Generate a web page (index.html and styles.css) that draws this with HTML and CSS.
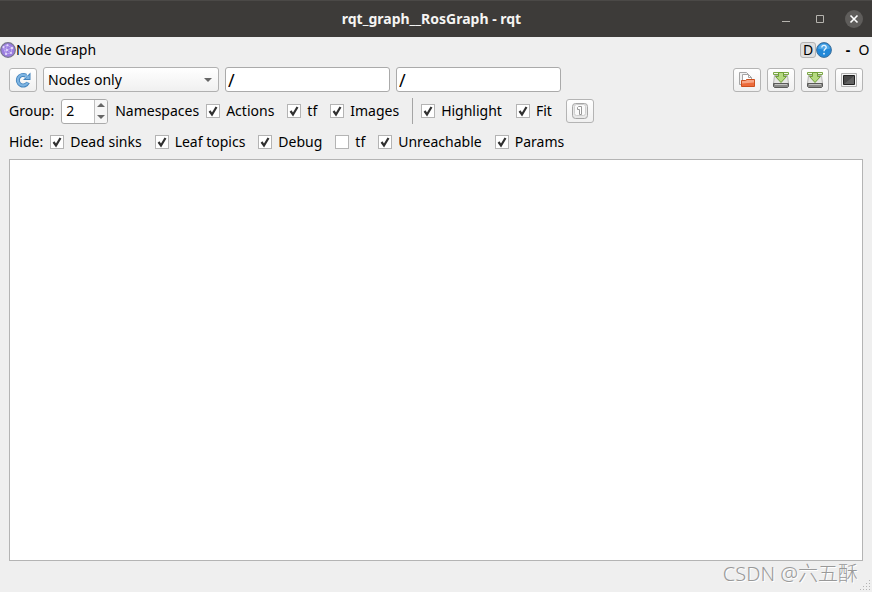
FILE: index.html
```
<!DOCTYPE html>
<html lang="en">
<head>
	<meta charset="UTF-8">
	<title>rqt_graph__RosGraph - rqt</title>
	<link rel="stylesheet" href="styles.css">
</head>
<body>
	<header class="titlebar">
		<h1>rqt_graph__RosGraph - rqt</h1>
		<div class="window-buttons">
			<button type="button" aria-label="Minimize"><svg width="18" height="18"><path d="M5 11.500h8" stroke="#b5b3ae"/></svg></button>
			<button type="button" aria-label="Maximize"><svg width="18" height="18"><path d="M5.500 5.500h7v7h-7z" fill="none" stroke="#b5b3ae"/></svg></button>
			<button type="button" class="close" aria-label="Close"><svg width="18" height="18"><path d="M5.500 5.500l7 7M12.500 5.500l-7 7" stroke="#fff" stroke-width="1.600"/></svg></button>
		</div>
	</header>

	<div class="dock">
		<svg class="dock-icon" width="16" height="16" viewBox="0 0 16 16">
			<circle cx="8" cy="8" r="7.300" fill="#9a7de0" stroke="#77758c" stroke-width="1.200"/>
			<path d="M3 5l4-2 5 3-1 5-5 1-3-7 8 6M7 3l-1 9M12 6l-8 3" fill="none" stroke="#c9b8f2" stroke-width=".7"/>
			<g fill="#e6dcfc"><circle cx="3.500" cy="5" r="1"/><circle cx="7.500" cy="3.200" r="1"/><circle cx="12" cy="6" r="1.200"/><circle cx="11" cy="11" r="1"/><circle cx="6" cy="12" r="1.100"/><circle cx="7" cy="8" r="1"/></g>
		</svg>
		<h2>Node Graph</h2>
		<button type="button" class="dock-d">D</button>
		<button type="button" class="help" aria-label="Help">
			<svg width="16" height="16" viewBox="0 0 16 16">
				<circle cx="8" cy="8" r="7.400" fill="#2188d8" stroke="#3f6f99"/>
				<path d="M2 6.500a6.200 6.200 0 0 1 12 0q-6 2-12 0z" fill="#51a8e8"/>
				<path d="M5.800 5.500c.2-2.800 4.600-2.600 4.400 0-.1 1.600-2.200 1.700-2.200 3.800" fill="none" stroke="#e9f5ff" stroke-width="1.300"/>
				<circle cx="8" cy="11.700" r=".9" fill="#e9f5ff"/>
			</svg>
		</button>
		<button type="button" class="dock-min">-</button>
		<button type="button" class="dock-close">O</button>
	</div>

	<main>
		<div class="row toolbar">
			<button type="button" class="btn" aria-label="Refresh">
				<svg width="16" height="16" viewBox="0 0 16 16">
					<path d="M13 10.500A5.300 5.300 0 1 1 11 3.700" fill="none" stroke="#4484bd" stroke-width="4"/>
					<path d="M15.500.5v7.500H8z" fill="#4484bd"/>
					<path d="M12.600 10.900A5.300 5.300 0 1 1 11 3.700L12.500 5" fill="none" stroke="#7db4e2" stroke-width="2.200"/>
					<path d="M14.600 2.800V7h-4.200z" fill="#7db4e2"/>
				</svg>
			</button>
			<select class="graph-type" aria-label="Graph type">
				<option>Nodes only</option>
				<option>Nodes/Topics (active)</option>
				<option>Nodes/Topics (all)</option>
			</select>
			<input type="text" class="filter" value="/" aria-label="Namespace filter">
			<input type="text" class="filter" value="/" aria-label="Topic filter">
			<div class="file-buttons">
				<button type="button" class="btn" aria-label="Load dot">
					<svg width="16" height="16" viewBox="0 0 16 16">
						<path d="M.5 12.500V.5h7l2 2v10z" fill="#f0f0f0" stroke="#a5a5a5"/>
						<path d="M3.500 12.500v-10h6l3 3v7z" fill="#fff" stroke="#a5a5a5"/>
						<path d="M9.500 2.500v3h3" fill="none" stroke="#a5a5a5"/>
						<path d="M2.500 14.500v-6h4l1-1h8v7z" fill="#ec6a3a" stroke="#cc4f1e"/>
						<path d="M3 11.500V9h4l1-1h7v2.500z" fill="#f7a585"/>
					</svg>
				</button>
				<button type="button" class="btn" aria-label="Save dot">
					<svg width="16" height="16" viewBox="0 0 16 16">
						<path d="M1.500 3.500h13l1 8H.5z" fill="#e6e6e4" stroke="#b4b4b2"/>
						<path d="M.5 11.500h15v3l-1 1h-13l-1-1z" fill="#8b8b89" stroke="#5a5a58"/>
						<path d="M2 12h12v1H2z" fill="#c4c4c2"/>
						<path d="M.5.5h15v2H.5z" fill="#f1f8e6" stroke="#7aa843"/>
						<path d="M5.500.5h5v4h3L8 10.500l-5.500-6h3z" fill="#b5da80" stroke="#6f9f35"/>
					</svg>
				</button>
				<button type="button" class="btn" aria-label="Save as SVG">
					<svg width="16" height="16" viewBox="0 0 16 16">
						<path d="M1.500 3.500h13l1 8H.5z" fill="#e6e6e4" stroke="#b4b4b2"/>
						<path d="M.5 11.500h15v3l-1 1h-13l-1-1z" fill="#8b8b89" stroke="#5a5a58"/>
						<path d="M2 12h12v1H2z" fill="#c4c4c2"/>
						<path d="M.5.5h15v2H.5z" fill="#f1f8e6" stroke="#7aa843"/>
						<path d="M5.500.5h5v4h3L8 10.500l-5.500-6h3z" fill="#b5da80" stroke="#6f9f35"/>
					</svg>
				</button>
				<button type="button" class="btn" aria-label="Save as image">
					<svg width="16" height="16" viewBox="0 0 16 16">
						<path d="M.5 1.500h15v13H.5z" fill="#f4f4f4" stroke="#b0b0b0"/>
						<path d="M2.500 3.500h11v9h-11z" fill="#484848" stroke="#222"/>
						<path d="M3 12l10-8v8z" fill="#626262"/>
					</svg>
				</button>
			</div>
		</div>

		<div class="row group">
			<label for="group">Group:</label>
			<div class="spin">
				<input type="number" id="group" value="2" min="0">
				<div class="spin-buttons">
					<button type="button" aria-label="Increase"><svg width="8" height="4"><path d="M0 4l4-4 4 4z" fill="#666"/></svg></button>
					<button type="button" aria-label="Decrease"><svg width="8" height="4"><path d="M0 0h8L4 4z" fill="#666"/></svg></button>
				</div>
			</div>
			<span>Namespaces</span>
			<div class="checks">
				<label><input type="checkbox" checked>Actions</label>
				<label><input type="checkbox" checked>tf</label>
				<label><input type="checkbox" checked>Images</label>
			</div>
			<div class="separator"></div>
			<div class="checks view">
				<label><input type="checkbox" checked>Highlight</label>
				<label><input type="checkbox" checked>Fit</label>
				<button type="button" class="btn" aria-label="Fit in view">
					<svg width="16" height="16" viewBox="0 0 16 16">
						<rect x=".5" y=".5" width="15" height="15" rx="3" fill="#e8e8e8" stroke="#a5a5a5"/>
						<rect x="2.500" y="1.500" width="11" height="11" rx="2" fill="#fafafa" stroke="#cfcfcf"/>
						<path d="M5.500 6.500v-2l1-1h3v8h-2v-5z" fill="#fff" stroke="#999"/>
					</svg>
				</button>
			</div>
		</div>

		<div class="row hide">
			<span>Hide:</span>
			<div class="checks">
				<label><input type="checkbox" checked>Dead sinks</label>
				<label><input type="checkbox" checked>Leaf topics</label>
				<label><input type="checkbox" checked>Debug</label>
				<label><input type="checkbox">tf</label>
				<label><input type="checkbox" checked>Unreachable</label>
				<label><input type="checkbox" checked>Params</label>
			</div>
		</div>

		<div class="graph"></div>
	</main>

	<footer>
		<span class="watermark">CSDN @六五酥</span>
		<svg class="grip" width="12" height="12" fill="#b4b4b4">
			<path d="M9 0h1v1h-1zM6 3h1v1h-1zM9 3h1v1h-1zM3 6h1v1h-1zM6 6h1v1h-1zM9 6h1v1h-1zM0 9h1v1h-1zM3 9h1v1h-1zM6 9h1v1h-1zM9 9h1v1h-1z"/>
		</svg>
	</footer>
</body>
</html>
```
FILE: styles.css
```
*{box-sizing: border-box;}
body{margin: 0;min-height: 100vh;display: flex;flex-direction: column;background: #efefef;color: #000;font: 14px/20px "Noto Sans", "Noto Sans CJK SC", sans-serif;}
h1,h2{margin: 0;font-size: 14px;}
button,input,select{font: inherit;color: inherit;margin: 0;padding: 0;}
button{display: flex;align-items: center;justify-content: center;border: 0;background: none;}
svg{display: block;flex: none;}

.titlebar{height: 37px;display: grid;grid-template-columns: 1fr auto 1fr;align-items: center;background: #3d3b39;border-top: 1px solid #4b4947;color: #f5f4f2;padding-right: 9px;}
.titlebar h1{grid-column: 2;}
.window-buttons{display: flex;justify-content: flex-end;gap: 16px;}
.window-buttons .close{background: #5f5d5b;border-radius: 50%;}

.dock{display: flex;align-items: center;height: 26px;}
.dock h2{font-weight: normal;margin-right: auto;}
.dock-d{width: 16px;height: 16px;border: 1px solid #b4b4b4;border-radius: 3px;background: #dfdfdf;}
.dock-min{width: 16px;margin-left: 8px;font-weight: bold;}
.dock-close{width: 16px;}

main{flex: 1;display: flex;flex-direction: column;padding: 4px 9px 0;}
.row{display: flex;align-items: center;gap: 7px;}
.toolbar{gap: 6px;}
.btn{width: 28px;height: 24px;border: 1px solid #b4b4b4;border-radius: 3px;background: linear-gradient(#fff, #f0f0f0);}
.graph-type{appearance: none;width: 176px;height: 25px;padding: 0 4px;border: 1px solid #b0b0b0;border-radius: 3px;background: url("data:image/svg+xml,%3Csvg xmlns='http://www.w3.org/2000/svg' width='8' height='4'%3E%3Cpath d='M0 0h8L4 4z' fill='%23666'/%3E%3C/svg%3E") no-repeat right 6px center, linear-gradient(#fff, #f0f0f0);}
.filter{width: 165px;height: 25px;padding: 0 2px;border: 1px solid #aaa;border-radius: 3px;background: #fff;font-size: 18px;}
.file-buttons{display: flex;gap: 6px;margin-left: auto;}

.group{margin-top: 6px;height: 26px;}
.spin{display: flex;width: 47px;height: 25px;border: 1px solid #aaa;border-radius: 3px;background: #fff;overflow: hidden;}
.spin input{flex: 1;min-width: 0;padding-left: 4px;border: 0;background: none;appearance: textfield;}
.spin input::-webkit-inner-spin-button{display: none;}
.spin-buttons{display: flex;flex-direction: column;width: 13px;border-left: 1px solid #c0c0c0;background: #f6f6f6;}
.spin-buttons button{flex: 1;}
.checks{display: flex;align-items: center;gap: 13px;}
.checks label{display: flex;align-items: center;gap: 6px;}
.checks input{appearance: none;width: 14px;height: 14px;border: 1px solid #b4b4b4;background: #fff;}
.checks input:checked{background: #fff url("data:image/svg+xml,%3Csvg xmlns='http://www.w3.org/2000/svg' width='12' height='12'%3E%3Cpath d='M2.500 6l2.500 3.500L9.500 2' fill='none' stroke='%23303030' stroke-width='2.200'/%3E%3C/svg%3E") center no-repeat;}
.view{gap: 14px;}
.separator{width: 1px;height: 26px;margin: 0 1px 0 6px;background: #a5a5a5;}
.hide{height: 35px;}
.graph{flex: 1;border: 1px solid #b4b4b4;background: #fff;}

footer{display: flex;justify-content: flex-end;height: 31px;padding-left: 9px;}
.watermark{font-weight: 300;font-size: 20px;line-height: 26px;color: #999;text-shadow: 1px 1px 0 #fff;}
.grip{align-self: flex-end;margin-left: 2px;}
```
